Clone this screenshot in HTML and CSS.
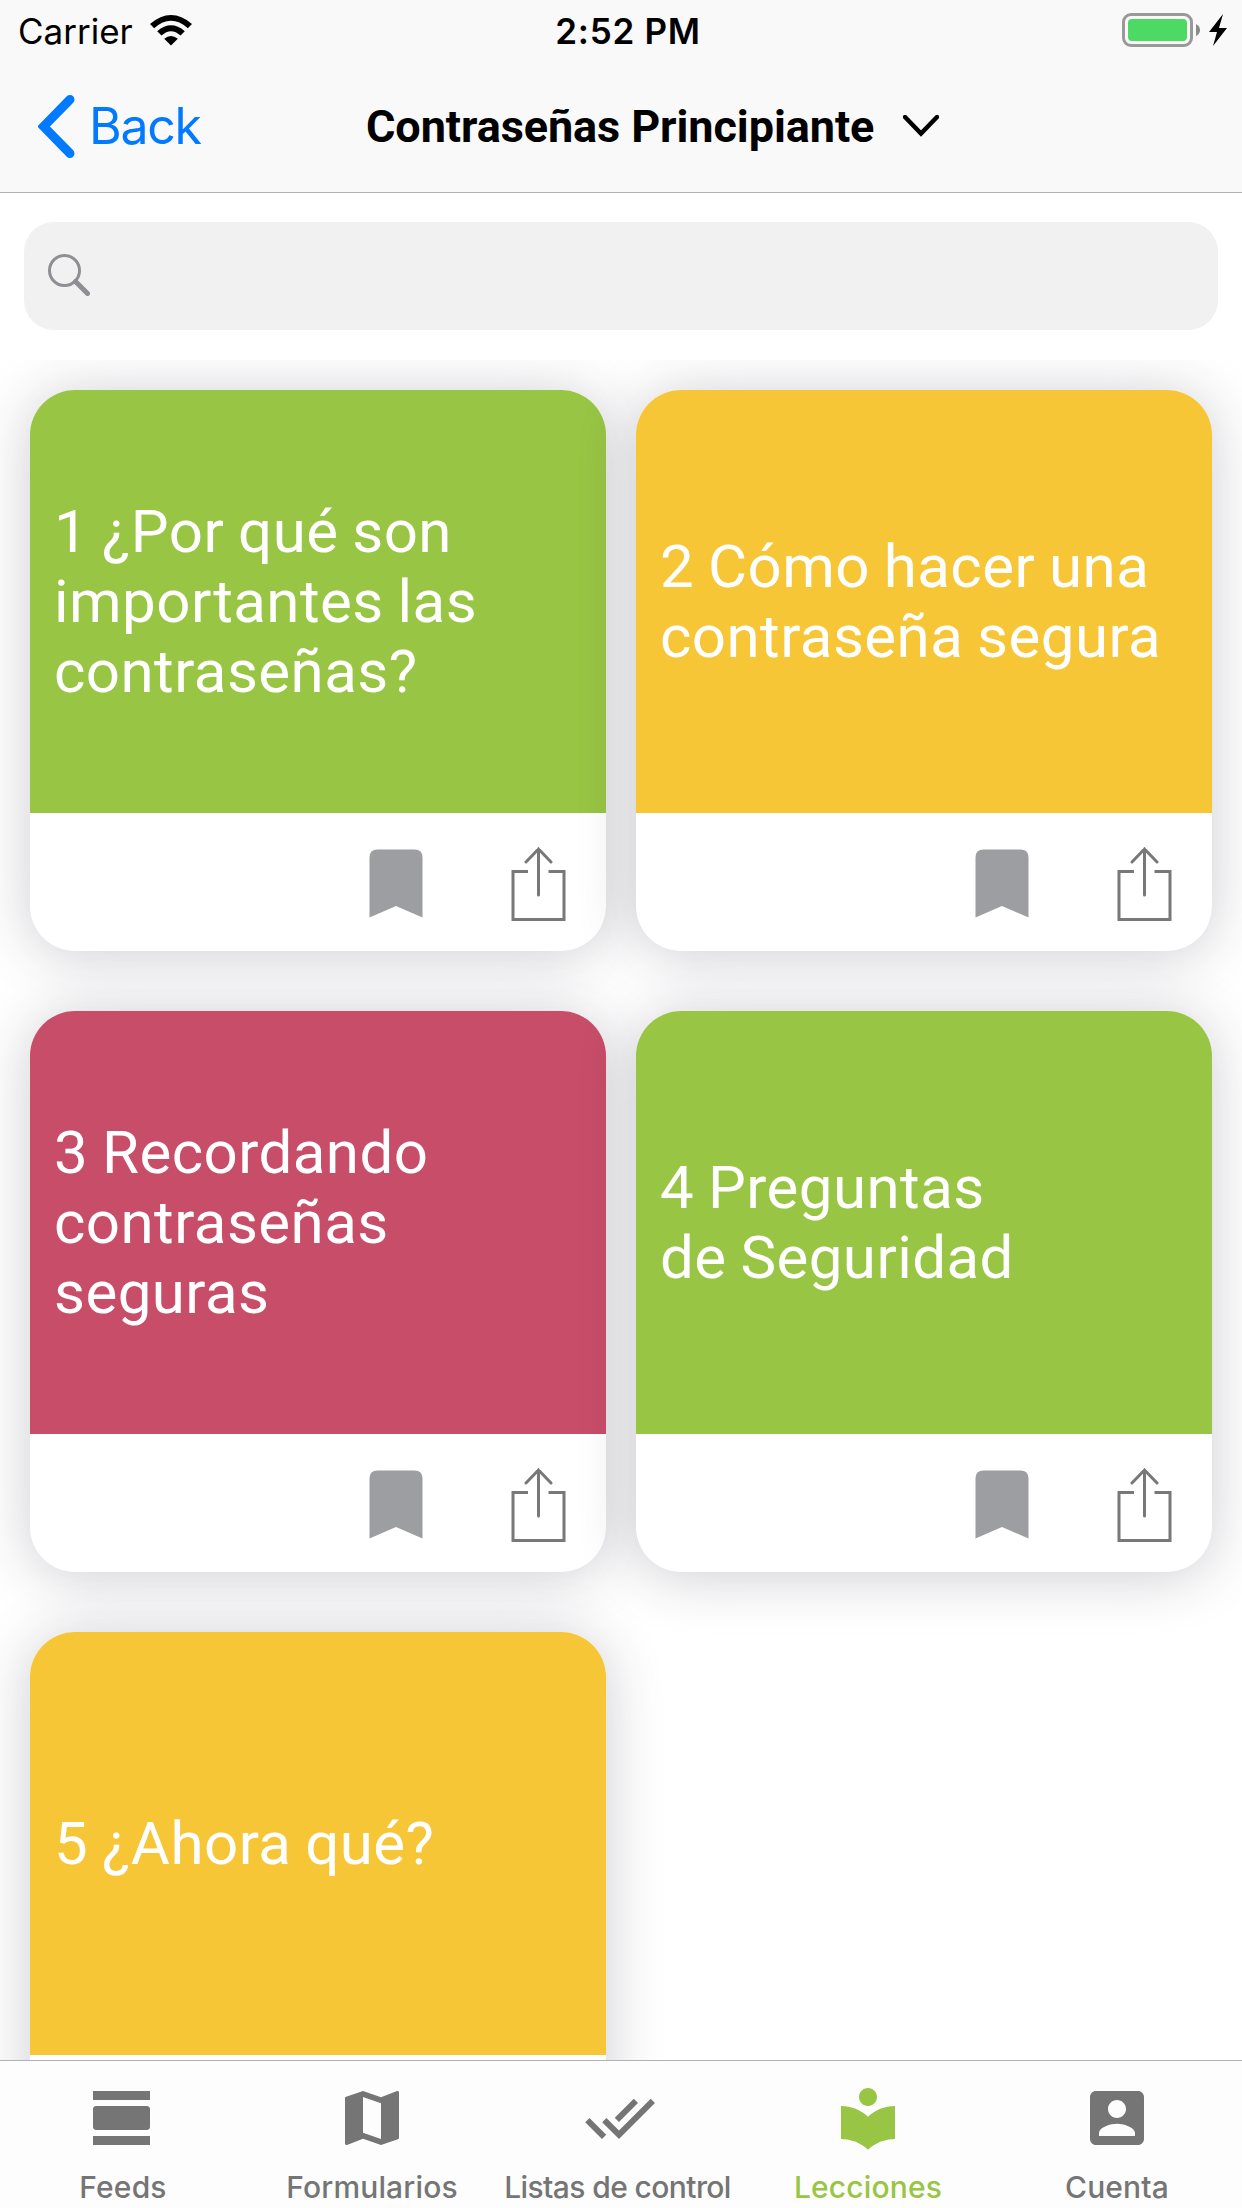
FILE: index.html
```html
<!DOCTYPE html>
<html lang="es">
<head>
<meta charset="utf-8">
<title>Contraseñas Principiante</title>
<link rel="stylesheet" href="styles.css">
</head>
<body>
<svg class="defs" width="0" height="0" aria-hidden="true">
  <symbol id="bookmark" viewBox="0 0 54 70"><path d="M.5 68.500V8.500Q.5.500 8.500.500h37Q53.500.500 53.500 8.500v60L27 57z"/></symbol>
  <symbol id="share" viewBox="0 0 56 75"><g fill="none" stroke="#787878" stroke-width="3"><path d="M18 24.500H3v48h51v-48H38.500"/><path d="M28.500 2v46M16 15 28.500 2 41 15" stroke-linecap="round"/></g></symbol>
</svg>
<header class="header">
  <div class="status">
    <div class="status-left"><span class="carrier">Carrier</span>
      <svg width="42" height="31" viewBox="0 0 42 31"><path d="M0 9Q21-9 42 9l-4.200 4.200Q21-1.500 4.200 13.200zM7.200 16.200Q21 4.500 34.800 16.200l-4.300 4.300Q21 12 11.500 20.500zM14.200 23.800Q21 18 27.800 23.800L21 30.600z"/></svg>
    </div>
    <span class="time">2:52 PM</span>
    <div class="status-right">
      <svg width="106" height="34" viewBox="0 0 106 34"><rect x="1.500" y="1.500" width="68" height="31" rx="7.500" fill="none" stroke="#999" stroke-width="3"/><rect x="6" y="6" width="59" height="22" rx="4" fill="#4cd964"/><path d="M74 11q4 2 4 6t-4 6z" fill="#8a8a8a"/><path d="M101 1 87 19h8l-4 14 14-18h-8z"/></svg>
    </div>
  </div>
  <div class="nav">
    <a class="back"><svg width="37" height="63" viewBox="0 0 37 63"><path d="M32 4.500 5.500 31.500 32 58.500" fill="none" stroke="#007aff" stroke-width="9" stroke-linecap="round" stroke-linejoin="miter"/></svg><span>Back</span></a>
    <h1 class="title"><span>Contraseñas Principiante</span><svg width="36" height="22" viewBox="0 0 36 22"><path d="m2 2 16 16.500L34 2" fill="none" stroke="#000" stroke-width="4.500" stroke-linecap="round"/></svg></h1>
  </div>
</header>
<div class="search-area"><div class="search"><svg width="42" height="42" viewBox="0 0 42 42"><g fill="none" stroke="#8e8e93"><circle cx="16.500" cy="16.500" r="15" stroke-width="3"/><path d="M27.500 27.500 39.500 39.500" stroke-width="5" stroke-linecap="round"/></g></svg></div></div>
<main class="lessons">
  <article class="card green"><h2>1 ¿Por qué son<br>importantes las<br>contraseñas?</h2><div class="actions"><svg class="bm"><use href="#bookmark"/></svg><svg class="sh"><use href="#share"/></svg></div></article>
  <article class="card yellow"><h2>2 Cómo hacer una<br>contraseña segura</h2><div class="actions"><svg class="bm"><use href="#bookmark"/></svg><svg class="sh"><use href="#share"/></svg></div></article>
  <article class="card red"><h2>3 Recordando<br>contraseñas<br>seguras</h2><div class="actions"><svg class="bm"><use href="#bookmark"/></svg><svg class="sh"><use href="#share"/></svg></div></article>
  <article class="card green"><h2>4 Preguntas<br>de Seguridad</h2><div class="actions"><svg class="bm"><use href="#bookmark"/></svg><svg class="sh"><use href="#share"/></svg></div></article>
  <article class="card yellow"><h2>5 ¿Ahora qué?</h2><div class="actions"><svg class="bm"><use href="#bookmark"/></svg><svg class="sh"><use href="#share"/></svg></div></article>
</main>
<nav class="tabs">
  <a class="tab first"><svg viewBox="0 0 24 24"><path d="M2 21h19v-3H2v3zM20 8H3c-.550 0-1 .450-1 1v6c0 .550.450 1 1 1h17c.550 0 1-.450 1-1V9c0-.550-.450-1-1-1zM2 3v3h19V3H2z"/></svg><span>Feeds</span></a>
  <a class="tab"><svg viewBox="0 0 24 24"><path d="M20.500 3l-.160.030L15 5.100 9 3 3.360 4.900c-.210.070-.360.250-.360.480V20.500c0 .280.220.500.500.500l.160-.030L9 18.900l6 2.100 5.640-1.900c.210-.070.360-.250.360-.480V3.500c0-.280-.220-.500-.500-.500zM15 19l-6-2.110V5l6 2.110V19z"/></svg><span>Formularios</span></a>
  <a class="tab"><svg viewBox="0 0 24 24"><path d="M18 7l-1.410-1.410-6.340 6.340 1.410 1.410L18 7zm4.240-1.410L11.660 16.170 7.480 12l-1.410 1.410L11.660 19l12-12-1.420-1.410zM.410 13.410L6 19l1.410-1.410L1.830 12 .410 13.410z"/></svg><span class="tight">Listas de control</span></a>
  <a class="tab active"><svg viewBox="0 0 24 24"><path d="M12 11.550C9.640 9.350 6.480 8 3 8v11c3.480 0 6.640 1.350 9 3.550 2.360-2.190 5.520-3.550 9-3.550V8c-3.480 0-6.640 1.350-9 3.550zM12 8c1.660 0 3-1.340 3-3s-1.340-3-3-3-3 1.340-3 3 1.340 3 3 3z"/></svg><span>Lecciones</span></a>
  <a class="tab last"><svg viewBox="0 0 24 24"><path d="M3 5v14c0 1.100.890 2 2 2h14c1.100 0 2-.900 2-2V5c0-1.100-.900-2-2-2H5c-1.110 0-2 .900-2 2zm12 4c0 1.660-1.340 3-3 3s-3-1.340-3-3 1.340-3 3-3 3 1.340 3 3zm-9 8c0-2 4-3.100 6-3.100s6 1.100 6 3.100v1H6v-1z"/></svg><span>Cuenta</span></a>
</nav>
</body>
</html>
```
FILE: styles.css
```css
* { box-sizing: border-box; }
body {
  margin: 0;
  width: 1242px;
  height: 2208px;
  overflow: hidden;
  display: flex;
  flex-direction: column;
  background: #fff;
  font-family: Inter, sans-serif;
}
svg { display: block; flex: none; }
.defs { display: none; }

.header { height: 193px; flex: none; background: #f9f9f9; border-bottom: 1px solid #b2b2b2; }
.status { height: 60px; display: grid; grid-template-columns: 1fr auto 1fr; align-items: center; padding: 0 14px 0 18px; }
.status-left { display: flex; align-items: center; gap: 17px; }
.carrier { font-size: 35px; padding-top: 2px; }
.time { font-size: 35px; font-weight: 600; letter-spacing: 0.7px; padding: 2px 0 0 10px; }
.status-right { justify-self: end; }
.nav { height: 132px; display: grid; grid-template-columns: 366px 1fr; align-items: center; }
.back { display: flex; align-items: center; gap: 14px; padding-left: 38px; color: #007aff; font-size: 50px; letter-spacing: -1.3px; }
.title { margin: 0; display: flex; align-items: center; gap: 29px; font: 700 45px Roboto, sans-serif; letter-spacing: -0.08px; white-space: nowrap; }

.search-area { height: 167px; flex: none; padding: 29px 24px 0; }
.search { height: 108px; border-radius: 30px; background: #f1f1f2; padding: 32px 24px; }

.lessons {
  flex: 1;
  min-height: 0;
  overflow: hidden;
  padding: 30px 30px 0;
  display: grid;
  grid-template-columns: 576px 576px;
  grid-auto-rows: 561px;
  gap: 60px 30px;
}
.card { border-radius: 45px; background: #fff; box-shadow: 0 4px 57px rgba(40, 40, 60, 0.23); }
.card h2 {
  margin: 0;
  height: 423px;
  padding: 0 24px;
  border-radius: 45px 45px 0 0;
  display: flex;
  align-items: center;
  color: #fff;
  font: 400 60px/70px Roboto, sans-serif;
  letter-spacing: 0.45px;
  word-spacing: -1.500px;
  white-space: nowrap;
}
.green h2 { background: #98c544; }
.yellow h2 { background: #f6c636; }
.red h2 { background: #c84d69; }
.actions { height: 138px; display: flex; align-items: flex-start; justify-content: flex-end; gap: 87px; padding: 34px 40px 0 0; }
.bm { width: 54px; height: 70px; margin-top: 2px; fill: #9d9ea2; }
.sh { width: 56px; height: 75px; }

.tabs { height: 148px; flex: none; display: grid; grid-template-columns: repeat(5, 248px); background: #fdfdfd; border-top: 1px solid #b2b2b2; }
.tab { display: flex; flex-direction: column; align-items: center; padding-top: 21px; color: #757575; font-size: 30px; font-weight: 500; letter-spacing: 0.15px; white-space: nowrap; }
.tab svg { width: 72px; height: 72px; fill: currentColor; }
.tab span { line-height: 36px; margin-top: 15px; }
.tab .tight { letter-spacing: -0.6px; margin-right: 5px; }
.tab.active { color: #98c544; }
.tab.first { padding-right: 2px; }
.tab.last { padding-left: 2px; }
```
